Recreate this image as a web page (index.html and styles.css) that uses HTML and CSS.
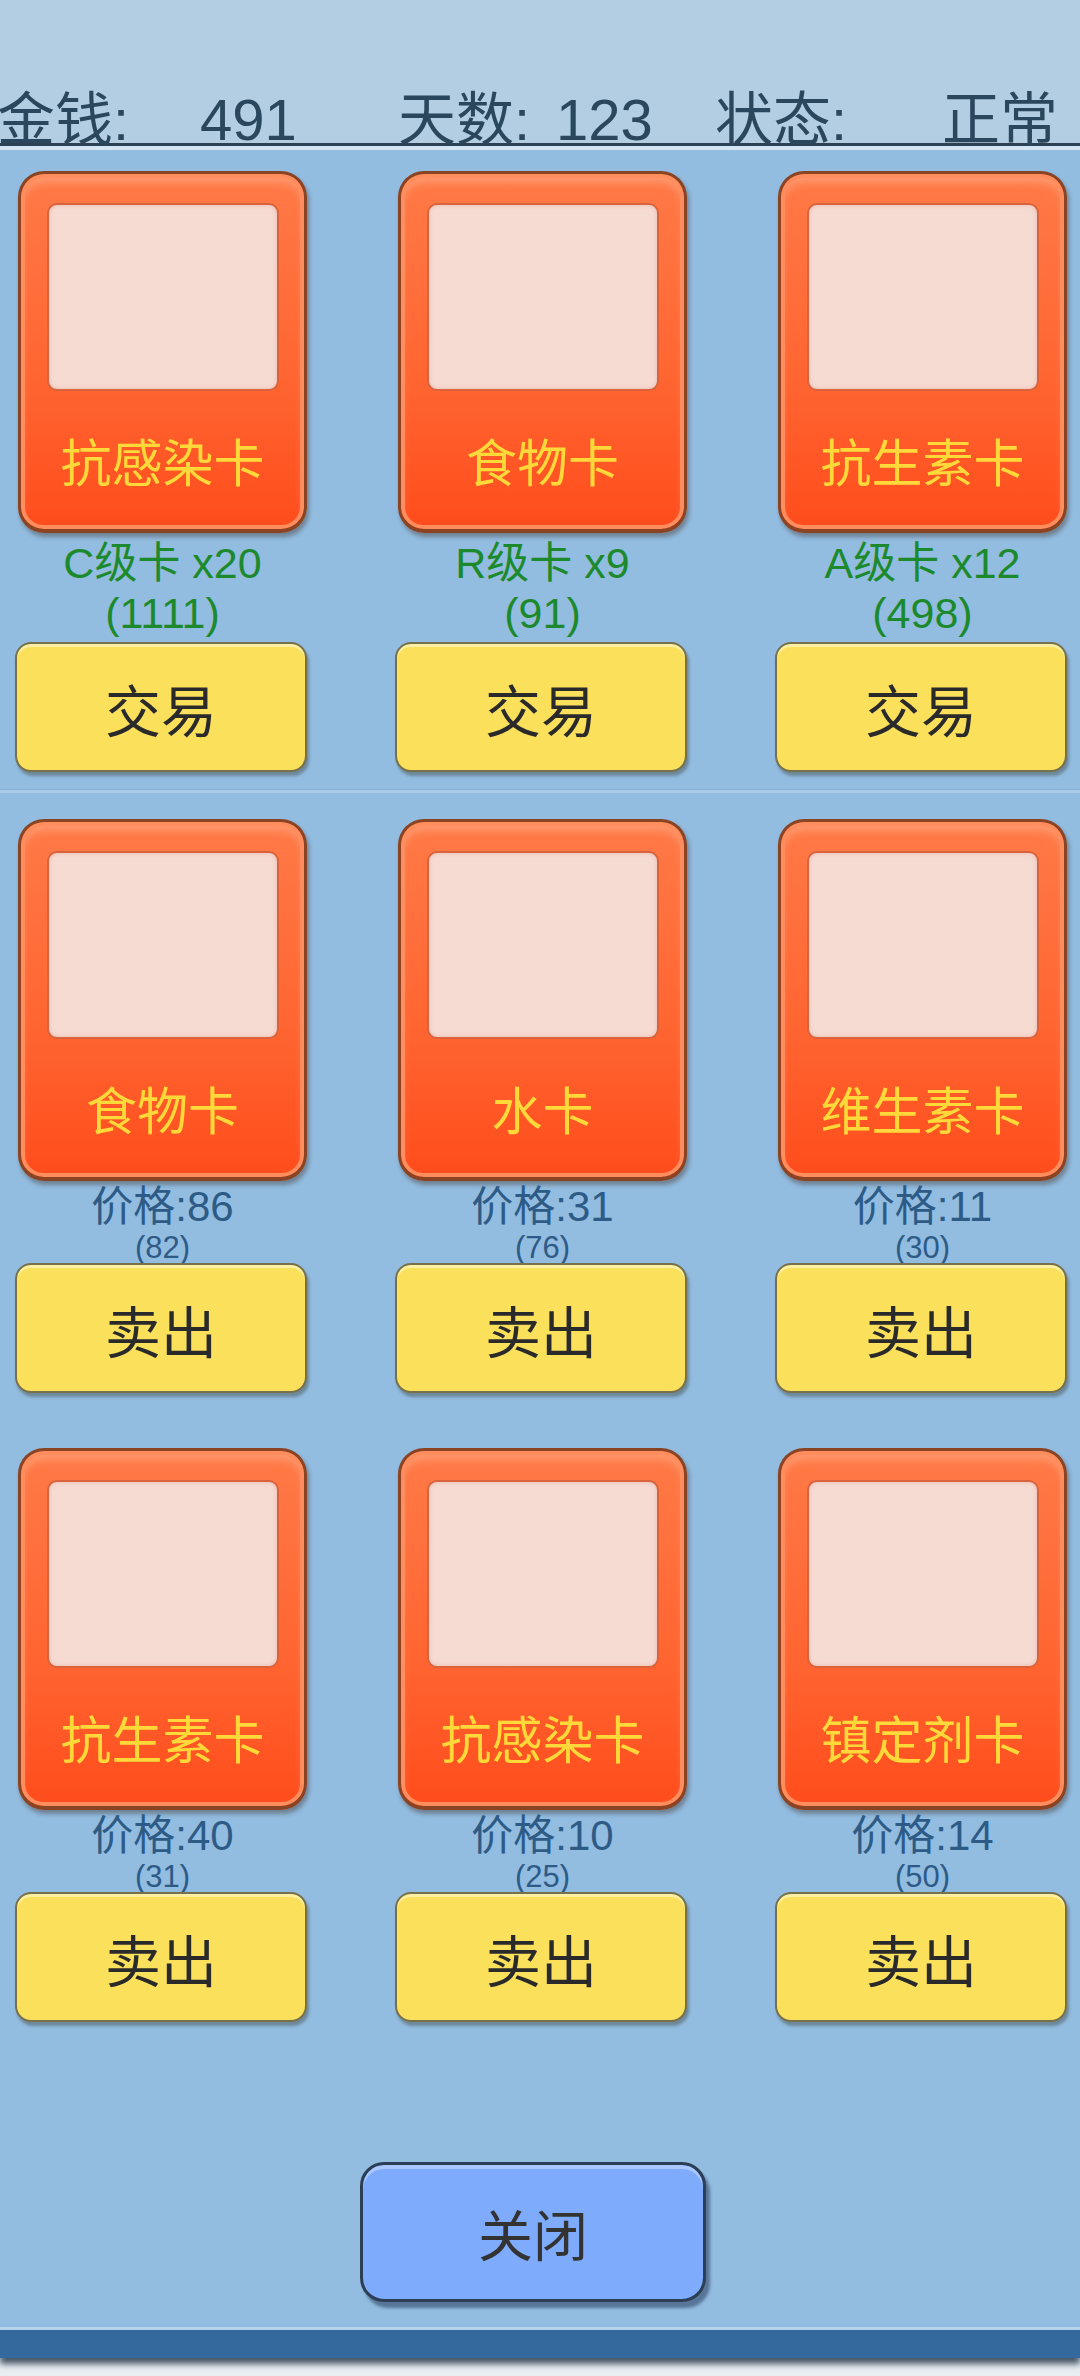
FILE: index.html
```html
<!DOCTYPE html>
<html lang="zh-CN">
<head>
  <meta charset="UTF-8">
  <title>交易</title>
  <link rel="stylesheet" href="styles.css">
</head>
<body>
  <div class="top">
    <div class="stats">
      <span class="lbl first">金钱:</span><span>491</span>
      <span class="lbl">天数:</span><span>123</span>
      <span class="lbl">状态:</span><span>正常</span>
    </div>
  </div>
  <div class="panel">
    <section class="shelf owned">
      <div class="slot">
        <div class="card"><div class="pic"></div><div class="name">抗感染卡</div></div>
        <div class="info"><div>C级卡 x20</div><div>(1111)</div></div>
        <button class="btn">交易</button>
      </div>
      <div class="slot">
        <div class="card"><div class="pic"></div><div class="name">食物卡</div></div>
        <div class="info"><div>R级卡 x9</div><div>(91)</div></div>
        <button class="btn">交易</button>
      </div>
      <div class="slot">
        <div class="card"><div class="pic"></div><div class="name">抗生素卡</div></div>
        <div class="info"><div>A级卡 x12</div><div>(498)</div></div>
        <button class="btn">交易</button>
      </div>
    </section>
    <div class="divider"></div>
    <section class="shelf market">
      <div class="slot">
        <div class="card"><div class="pic"></div><div class="name">食物卡</div></div>
        <div class="price">价格:86</div><div class="sub">(82)</div>
        <button class="btn">卖出</button>
      </div>
      <div class="slot">
        <div class="card"><div class="pic"></div><div class="name">水卡</div></div>
        <div class="price">价格:31</div><div class="sub">(76)</div>
        <button class="btn">卖出</button>
      </div>
      <div class="slot">
        <div class="card"><div class="pic"></div><div class="name">维生素卡</div></div>
        <div class="price">价格:11</div><div class="sub">(30)</div>
        <button class="btn">卖出</button>
      </div>
      <div class="slot">
        <div class="card"><div class="pic"></div><div class="name">抗生素卡</div></div>
        <div class="price">价格:40</div><div class="sub">(31)</div>
        <button class="btn">卖出</button>
      </div>
      <div class="slot">
        <div class="card"><div class="pic"></div><div class="name">抗感染卡</div></div>
        <div class="price">价格:10</div><div class="sub">(25)</div>
        <button class="btn">卖出</button>
      </div>
      <div class="slot">
        <div class="card"><div class="pic"></div><div class="name">镇定剂卡</div></div>
        <div class="price">价格:14</div><div class="sub">(50)</div>
        <button class="btn">卖出</button>
      </div>
    </section>
    <div class="footer">
      <button class="close">关闭</button>
    </div>
  </div>
  <div class="bottom-bar"></div>
</body>
</html>
```

FILE: styles.css
```css
body {
  margin: 0;
  width: 1080px;
  height: 2376px;
  overflow: hidden;
  background: #e8eef2;
  font-family: 'Liberation Sans', 'Noto Sans CJK SC', sans-serif;
}
.top {
  box-sizing: border-box;
  height: 146px;
  padding-top: 97px;
  background: #b3cee2;
  border-bottom: 3px solid #2d4154;
}
.stats {
  display: grid;
  grid-template-columns: 200px 198px 158px 159px 227px 1fr;
  font-size: 58px;
  line-height: 46px;
  color: #2b475d;
}
.stats .first {
  margin-left: -3px;
}
.panel {
  height: 2177px;
  background: #92bce0;
  border-top: 4px solid #d4e6f4;
}
.shelf {
  display: grid;
  grid-template-columns: repeat(3, 289px);
  column-gap: 91px;
  padding-left: 18px;
}
.owned {
  padding-top: 21px;
}
.market {
  padding-top: 26px;
  row-gap: 55px;
}
.slot {
  display: flex;
  flex-direction: column;
  align-items: center;
}
.card {
  box-sizing: border-box;
  width: 289px;
  height: 362px;
  border: 3px solid #8a4423;
  border-bottom-width: 4px;
  border-radius: 26px;
  background: linear-gradient(#ff7a47, #ff6430 60%, #ff4c1c);
  box-shadow: inset 0 0 0 4px #ff8d5e, inset 0 8px 10px rgba(255, 200, 170, 0.45), 2px 4px 4px rgba(60, 40, 30, 0.4);
  display: flex;
  flex-direction: column;
  align-items: center;
}
.pic {
  box-sizing: border-box;
  width: 232px;
  height: 188px;
  margin-top: 29px;
  background: #f6dbd3;
  border: 2px solid #d8633d;
  border-radius: 10px;
  box-shadow: inset 0 0 4px rgba(200, 80, 50, 0.25);
}
.name {
  margin-top: 44px;
  font-size: 51px;
  line-height: 60px;
  color: #ffd93a;
  white-space: nowrap;
}
.info {
  margin-top: 5px;
  font-size: 43px;
  line-height: 50px;
  color: #1c8a2c;
  text-align: center;
}
.price {
  margin-top: 1px;
  font-size: 42px;
  line-height: 50px;
  color: #2d5b86;
}
.sub {
  font-size: 31px;
  line-height: 32px;
  color: #2d5b86;
}
.btn {
  box-sizing: border-box;
  width: 292px;
  height: 130px;
  margin-left: -3px;
  margin-top: 4px;
  background: #fbe05b;
  border: 2px solid #76704c;
  border-radius: 16px;
  box-shadow: inset 0 3px 0 #fdf0a2, 2px 4px 3px rgba(40, 40, 20, 0.35);
  font-family: 'Liberation Sans', 'Noto Sans CJK SC', sans-serif;
  font-size: 56px;
  color: #2a2a2a;
  padding: 0;
}
.market .btn {
  margin-top: -1px;
}
.divider {
  height: 3px;
  margin-top: 17px;
  background: #a9cbe8;
  border-top: 1px solid #84aed6;
}
.footer {
  display: flex;
  padding-left: 360px;
  padding-top: 140px;
}
.close {
  box-sizing: border-box;
  width: 346px;
  height: 140px;
  background: #7eabfb;
  border: 3px solid #2c3e55;
  border-radius: 24px;
  box-shadow: inset 0 4px 0 #aac8ff, 4px 6px 3px rgba(30, 50, 80, 0.5);
  font-family: 'Liberation Sans', 'Noto Sans CJK SC', sans-serif;
  font-size: 55px;
  color: #333333;
  padding: 0;
}
.bottom-bar {
  height: 28px;
  background: #33699c;
  border-top: 3px solid #b4d4ee;
  box-shadow: 0 6px 6px rgba(30, 50, 70, 0.8);
}
```
